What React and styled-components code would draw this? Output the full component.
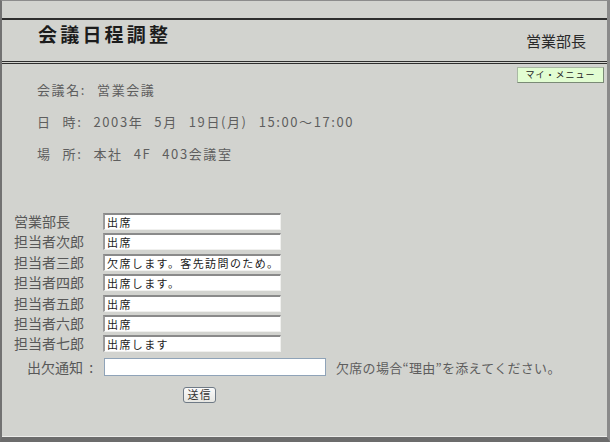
import React from "react";
import styled, { createGlobalStyle } from "styled-components";

const GlobalStyle = createGlobalStyle`
  html, body {
    margin: 0;
    padding: 0;
    background: #d2d3cf;
  }
  * {
    box-sizing: border-box;
  }
`;

const Frame = styled.div`
  width: 610px;
  height: 442px;
  background: #d2d3cf;
  border-left: 2px solid #727272;
  border-top: 1px solid #8c8c8c;
  border-right: 3px solid #8a8a8a;
  border-bottom: 5px solid #6c6c6c;
  box-shadow: inset 0 -1px 0 #ececea;
  font-family: "Noto Sans CJK JP", "Liberation Sans", sans-serif;
  color: #555;
  overflow: hidden;
`;

const Header = styled.header`
  display: flex;
  justify-content: space-between;
  align-items: flex-start;
  margin-top: 17px;
  height: 46px;
  border-top: 2px solid #2e2e2e;
  border-bottom: 3px double #2e2e2e;
  padding: 0 21px 0 36px;
`;

const Title = styled.h1`
  margin: 2px 0 0;
  font-size: 19px;
  line-height: 24px;
  font-weight: bold;
  letter-spacing: 3.2px;
  color: #1c1c1c;
`;

const UserName = styled.span`
  margin-top: 11px;
  font-size: 15px;
  line-height: 20px;
  color: #2a2a2a;
`;

const InfoRow = styled.div`
  display: flex;
  justify-content: space-between;
  align-items: flex-start;
  padding: 0 3px 0 35px;
`;

const InfoList = styled.div`
  padding-top: 10px;
`;

const InfoLine = styled.div`
  font-size: 13px;
  line-height: 32px;
  white-space: pre;
  letter-spacing: 1.6px;
  word-spacing: 1px;
  color: #5e5e5e;
`;

const MenuButton = styled.button`
  margin-top: 3px;
  width: 87px;
  height: 16px;
  padding: 0;
  background: #e2fdd2;
  border: 1px solid #a9b8a4;
  border-right-color: #7a8a76;
  border-bottom-color: #7a8a76;
  font-family: inherit;
  font-size: 9px;
  line-height: 14px;
  letter-spacing: 1px;
  color: #222;
`;

const Replies = styled.div`
  display: grid;
  grid-template-columns: 89px 178px;
  grid-auto-rows: 17px;
  row-gap: 3.4px;
  align-items: center;
  margin-top: 43px;
  padding-left: 12px;
`;

const Label = styled.span`
  font-size: 14px;
  line-height: 17px;
  color: #585858;
  white-space: nowrap;
`;

const ReplyInput = styled.input`
  width: 178px;
  height: 17px;
  margin: 0;
  padding: 0 0 0 2px;
  background: #fff;
  border-top: 2px solid #8a8a8a;
  border-left: 2px solid #9a9a9a;
  border-right: 1px solid #f0f0ee;
  border-bottom: 1px solid #f0f0ee;
  font-family: "Noto Sans CJK JP", sans-serif;
  font-size: 11px;
  letter-spacing: 1.4px;
  color: #222;
  outline: none;
`;

const NoticeRow = styled.div`
  display: flex;
  align-items: center;
  margin-top: 6px;
  padding-left: 25px;
`;

const NoticeLabel = styled.span`
  width: 77px;
  font-size: 14px;
  line-height: 17px;
  white-space: pre;
  color: #585858;
`;

const NoticeInput = styled.input`
  width: 222px;
  height: 18px;
  margin: 0;
  background: #fff;
  border: 1px solid #8fa3b8;
  outline: none;
`;

const Note = styled.span`
  margin-left: 10px;
  font-size: 13px;
  line-height: 17px;
  letter-spacing: 0.3px;
  color: #5e5e5e;
`;

const SubmitRow = styled.div`
  padding: 4px 0 0 181px;
`;

const SubmitButton = styled.button`
  width: 33px;
  height: 16px;
  padding: 0;
  background: linear-gradient(#fafafa, #e6e6e2);
  border: 1px solid #6f7a86;
  border-radius: 3px;
  font-family: "Noto Sans CJK JP", sans-serif;
  font-size: 11px;
  line-height: 13px;
  letter-spacing: 1px;
  color: #333;
`;

const replies = [
  { name: "営業部長", text: "出席" },
  { name: "担当者次郎", text: "出席" },
  { name: "担当者三郎", text: "欠席します。客先訪問のため。" },
  { name: "担当者四郎", text: "出席します。" },
  { name: "担当者五郎", text: "出席" },
  { name: "担当者六郎", text: "出席" },
  { name: "担当者七郎", text: "出席します" },
];

export default function App() {
  return (
    <>
      <GlobalStyle />
      <Frame>
        <Header>
          <Title>会議日程調整</Title>
          <UserName>営業部長</UserName>
        </Header>
        <InfoRow>
          <InfoList>
            <InfoLine>{"会議名:  営業会議"}</InfoLine>
            <InfoLine>{"日  時:  2003年  5月  19日(月)  15:00～17:00"}</InfoLine>
            <InfoLine>{"場  所:  本社  4F  403会議室"}</InfoLine>
          </InfoList>
          <MenuButton>マイ・メニュー</MenuButton>
        </InfoRow>
        <Replies>
          {replies.map((r) => (
            <React.Fragment key={r.name}>
              <Label>{r.name}</Label>
              <ReplyInput defaultValue={r.text} />
            </React.Fragment>
          ))}
        </Replies>
        <NoticeRow>
          <NoticeLabel>{"出欠通知  :"}</NoticeLabel>
          <NoticeInput />
          <Note>欠席の場合“理由”を添えてください。</Note>
        </NoticeRow>
        <SubmitRow>
          <SubmitButton>送信</SubmitButton>
        </SubmitRow>
      </Frame>
    </>
  );
}
